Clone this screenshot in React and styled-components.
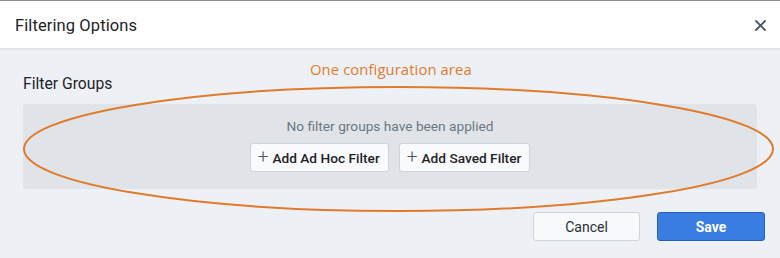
import React from "react";
import styled, { createGlobalStyle } from "styled-components";

const Global = createGlobalStyle`
  html, body { margin: 0; padding: 0; background: #edf1f5; }
  body { font-family: Roboto, "Liberation Sans", Arial, sans-serif; }
`;

const Dialog = styled.div`
  position: relative;
  width: 780px;
  height: 258px;
  box-sizing: border-box;
  border-top: 1px solid #8a8d91;
  display: flex;
  flex-direction: column;
  background: #edf1f5;
  overflow: hidden;
`;

const Header = styled.header`
  height: 49px;
  flex: none;
  display: flex;
  align-items: center;
  justify-content: space-between;
  padding: 1px 12px 0 15px;
  box-sizing: border-box;
  background: #ffffff;
  border-bottom: 2px solid #dfe3e8;
`;

const Title = styled.h1`
  margin: 0;
  font-size: 16.5px;
  font-weight: 400;
  color: #1f2328;
  letter-spacing: 0.1px;
`;

const Close = styled.button`
  border: 0;
  background: transparent;
  padding: 0;
  width: 16px;
  height: 16px;
  display: flex;
  align-items: center;
  justify-content: center;
  color: #4a5563;
`;

const Body = styled.main`
  flex: 1;
  display: flex;
  flex-direction: column;
  padding: 24px 15px 0 23px;
`;

const SectionTitle = styled.h2`
  margin: 0 0 10px 0;
  font-size: 15.7px;
  font-weight: 400;
  color: #1f2328;
  line-height: 20px;
`;

const EmptyBox = styled.div`
  height: 85px;
  margin-right: 8px;
  box-sizing: border-box;
  background: #e0e4e9;
  border-radius: 3px;
  display: flex;
  flex-direction: column;
  align-items: center;
  padding-top: 14px;
  gap: 8px;
`;

const EmptyText = styled.div`
  font-size: 13.7px;
  color: #6b7683;
  line-height: 17px;
`;

const Row = styled.div`
  display: flex;
  gap: 10px;
`;

const AddButton = styled.button`
  height: 29px;
  box-sizing: border-box;
  display: flex;
  align-items: center;
  gap: 4px;
  padding: 0 8px 0 7px;
  background: #f8fafc;
  border: 1px solid #cdd3da;
  border-radius: 3px;
  font-family: inherit;
  font-size: 13.7px;
  font-weight: 500;
  color: #1f2328;
`;

const Plus = styled.span`
  font-size: 19px;
  font-weight: 300;
  color: #4a5563;
  line-height: 1;
  margin-top: -3px;
`;

const Footer = styled.div`
  display: flex;
  justify-content: flex-end;
  gap: 17px;
  margin-top: 23px;
`;

const FooterButton = styled.button`
  width: ${(p) => p.$w}px;
  height: 29px;
  box-sizing: border-box;
  border-radius: 3px;
  font-family: inherit;
  font-size: 14px;
  background: ${(p) => (p.$primary ? "#3a7de2" : "#f7f9fb")};
  border: 1px solid ${(p) => (p.$primary ? "#2660bf" : "#cfd5dc")};
  color: ${(p) => (p.$primary ? "#ffffff" : "#2a2f35")};
  font-weight: ${(p) => (p.$primary ? 700 : 400)};
`;

const Annotation = styled.svg`
  position: absolute;
  left: 0;
  top: 0;
  pointer-events: none;
`;

const AnnotationLabel = styled.div`
  position: absolute;
  left: 310px;
  top: 58px;
  font-family: "Open Sans", sans-serif;
  font-size: 14.8px;
  color: #e07b2c;
  letter-spacing: 0.1px;
`;

export default function App() {
  return (
    <>
      <Global />
      <Dialog>
        <Header>
          <Title>Filtering Options</Title>
          <Close aria-label="Close">
            <svg width="11" height="11" viewBox="0 0 11 11">
              <path d="M1 1L10 10M10 1L1 10" stroke="currentColor" strokeWidth="1.8" strokeLinecap="round" />
            </svg>
          </Close>
        </Header>
        <Body>
          <SectionTitle>Filter Groups</SectionTitle>
          <EmptyBox>
            <EmptyText>No filter groups have been applied</EmptyText>
            <Row>
              <AddButton><Plus>+</Plus>Add Ad Hoc Filter</AddButton>
              <AddButton><Plus>+</Plus>Add Saved Filter</AddButton>
            </Row>
          </EmptyBox>
          <Footer>
            <FooterButton $w={107}>Cancel</FooterButton>
            <FooterButton $w={108} $primary>Save</FooterButton>
          </Footer>
        </Body>
        <Annotation width="780" height="258" viewBox="0 0 780 258">
          <ellipse cx="398.5" cy="148" rx="374.5" ry="62" fill="none" stroke="#e07b2c" strokeWidth="2" />
        </Annotation>
        <AnnotationLabel>One configuration area</AnnotationLabel>
      </Dialog>
    </>
  );
}
